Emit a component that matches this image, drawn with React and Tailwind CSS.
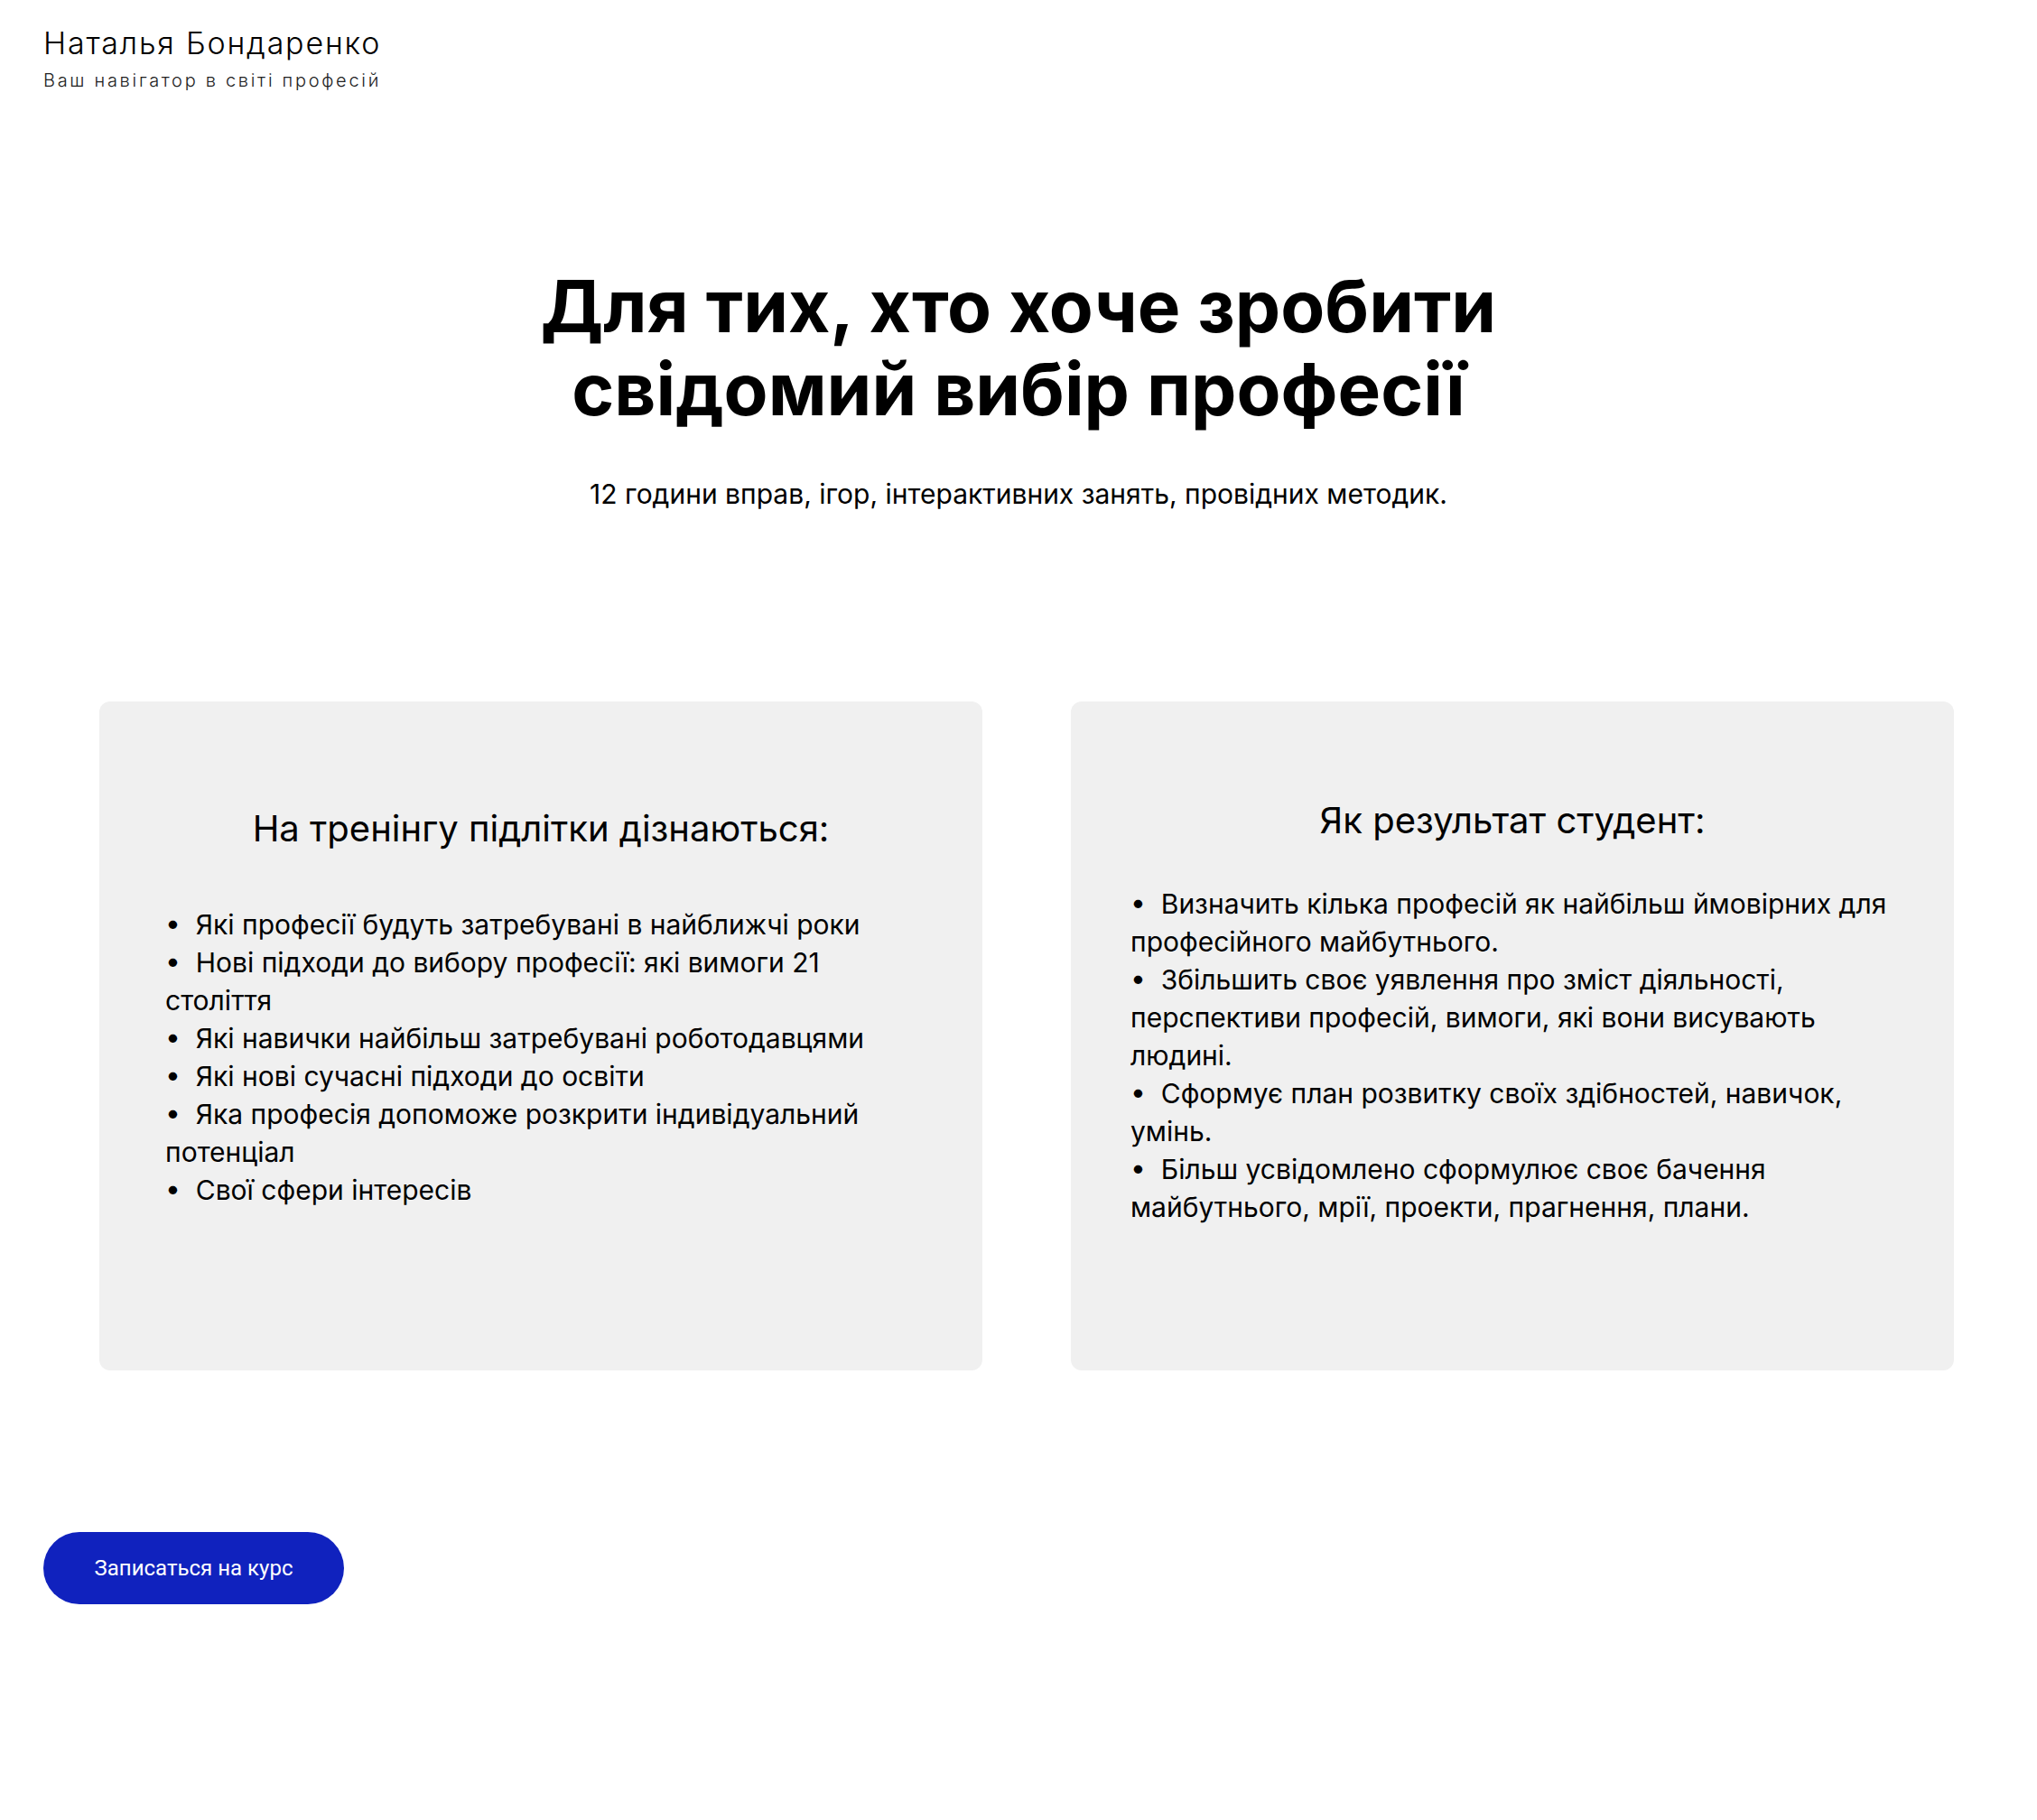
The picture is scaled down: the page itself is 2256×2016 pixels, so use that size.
import React from "react";

const learn = [
  "Які професії будуть затребувані в найближчі роки",
  "Нові підходи до вибору професії: які вимоги 21 століття",
  "Які навички найбільш затребувані роботодавцями",
  "Які нові сучасні підходи до освіти",
  "Яка професія допоможе розкрити індивідуальний потенціал",
  "Свої сфери інтересів",
];

const results = [
  "Визначить кілька професій як найбільш ймовірних для професійного майбутнього.",
  "Збільшить своє уявлення про зміст діяльності, перспективи професій, вимоги, які вони висувають людині.",
  "Сформує план розвитку своїх здібностей, навичок, умінь.",
  "Більш усвідомлено сформулює своє бачення майбутнього, мрії, проекти, прагнення, плани.",
];

function Bullets({ items }) {
  return (
    <p className="text-[30px] leading-[42px] text-black">
      {items.map((t, i) => (
        <React.Fragment key={i}>
          {"•\u00A0 "}
          {t}
          {i < items.length - 1 && <br />}
        </React.Fragment>
      ))}
    </p>
  );
}

export default function App() {
  return (
    <div className="min-h-[2016px] bg-white font-['Inter',sans-serif] text-black">
      {/* Header */}
      <header className="pl-[48px] pt-[28px]">
        <div className="text-[34px] leading-[40px] font-light tracking-[1.8px]">Наталья Бондаренко</div>
        <div className="mt-[9px] text-[20px] leading-[24px] font-light tracking-[2.7px] text-[#222]">
          Ваш навігатор в світі професій
        </div>
      </header>

      {/* Hero */}
      <section className="mt-[192px] text-center">
        <h1 className="text-[80px] leading-[92px] font-bold">
          Для тих, хто хоче зробити
          <br />
          свідомий вибір професії
        </h1>
        <p className="mt-[50px] text-[30px] leading-[40px]">
          12 години вправ, ігор, інтерактивних занять, провідних методик.
        </p>
      </section>

      {/* Cards */}
      <section className="mt-[210px] ml-[110px] grid grid-cols-[978px_978px] gap-[98px]">
        <div className="h-[741px] rounded-[12px] bg-[#f0f0f0] px-[73px] pt-[118px]">
          <h2 className="text-center text-[40px] leading-[46px]">
            На тренінгу підлітки дізнаються:
          </h2>
          <div className="mt-[62px]">
            <Bullets items={learn} />
          </div>
        </div>
        <div className="h-[741px] rounded-[12px] bg-[#f0f0f0] px-[66px] pt-[109px]">
          <h2 className="text-center text-[40px] leading-[46px]">
            Як результат студент:
          </h2>
          <div className="mt-[48px]">
            <Bullets items={results} />
          </div>
        </div>
      </section>

      {/* CTA */}
      <div className="mt-[179px] pl-[48px]">
        <button className="flex h-[80px] w-[333px] items-center justify-center rounded-full bg-[#1022be] font-['Roboto',sans-serif] text-[24px] text-white">
          Записаться на курс
        </button>
      </div>
    </div>
  );
}
